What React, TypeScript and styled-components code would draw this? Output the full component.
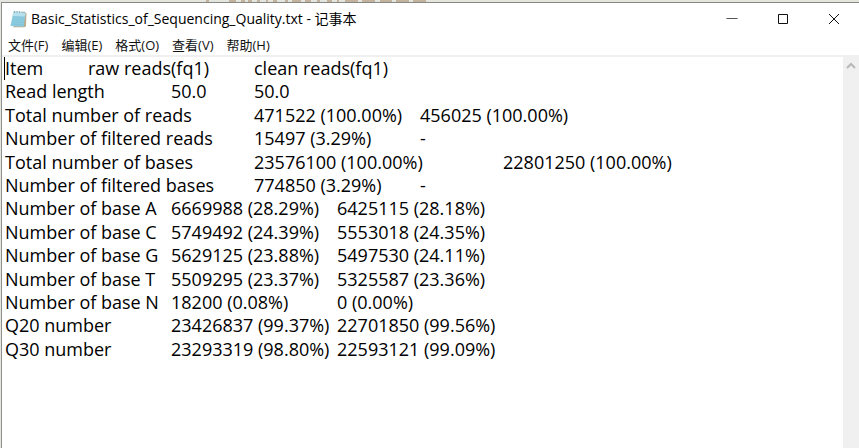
import React from "react";
import styled, { createGlobalStyle } from "styled-components";

const GlobalStyle = createGlobalStyle`
  * { box-sizing: border-box; }
  body {
    margin: 0;
    background: #e4e5df;
    color: #000;
    font-family: "Open Sans", "Noto Sans CJK SC", sans-serif;
  }
`;

const Desktop = styled.div`
  display: flex;
  flex-direction: column;
  height: 100vh;
  padding-left: 1px;
`;

const Backdrop = styled.svg`
  display: block;
  flex: none;
  width: 100%;
  height: 2px;
`;

const Window = styled.main`
  display: flex;
  flex: 1;
  flex-direction: column;
  min-height: 0;
  border-top: 1px solid #868884;
  border-left: 1px solid #8e908c;
  background: #fff;
`;

const TitleBar = styled.header`
  display: flex;
  flex: none;
  align-items: center;
  height: 32px;
  padding-left: 8px;
`;

const Title = styled.h1`
  flex: 1;
  margin: 0 0 0 4px;
  overflow: hidden;
  font-size: 14px;
  font-weight: 400;
  line-height: 20px;
  white-space: nowrap;
`;

const CaptionButton = styled.button`
  display: flex;
  flex: none;
  align-items: center;
  justify-content: center;
  width: 51px;
  height: 30px;
  padding: 0;
  border: 0;
  background: transparent;
`;

const MenuBar = styled.nav`
  display: flex;
  flex: none;
  gap: 13px;
  height: 20px;
  padding-left: 6px;
`;

const MenuButton = styled.button`
  padding: 0;
  border: 0;
  background: transparent;
  color: #111;
  font-family: inherit;
  font-size: 13px;
  line-height: 20px;
  white-space: nowrap;
`;

const Editor = styled.section`
  position: relative;
  display: flex;
  flex: 1;
  min-height: 0;
  border-top: 2px solid #f0f0f0;
`;

const TextArea = styled.textarea`
  flex: 1;
  min-width: 0;
  padding: 0 0 0 3px;
  border: 0;
  outline: 0;
  overflow: hidden;
  resize: none;
  background: #fff;
  color: #000;
  font-family: inherit;
  font-size: 18px;
  line-height: 1.3;
  tab-size: 83px;
  white-space: pre;
`;

const Caret = styled.span`
  position: absolute;
  top: 0;
  left: 2px;
  width: 1px;
  height: 23px;
  background: #000;
`;

const ScrollBar = styled.div`
  flex: none;
  width: 16px;
  background: #f0f0f0;
`;

const ScrollButton = styled.button`
  display: flex;
  align-items: center;
  justify-content: center;
  width: 16px;
  height: 18px;
  padding: 0;
  border: 0;
  background: transparent;
`;

const menus = ["文件(F)", "编辑(E)", "格式(O)", "查看(V)", "帮助(H)"];

const fileText = [
  "Item\traw reads(fq1)\tclean reads(fq1)",
  "Read length\t50.0\t50.0",
  "Total number of reads\t471522 (100.00%)\t456025 (100.00%)",
  "Number of filtered reads\t15497 (3.29%)\t-",
  "Total number of bases\t23576100 (100.00%)\t22801250 (100.00%)",
  "Number of filtered bases\t774850 (3.29%)\t-",
  "Number of base A\t6669988 (28.29%)\t6425115 (28.18%)",
  "Number of base C\t5749492 (24.39%)\t5553018 (24.35%)",
  "Number of base G\t5629125 (23.88%)\t5497530 (24.11%)",
  "Number of base T\t5509295 (23.37%)\t5325587 (23.36%)",
  "Number of base N\t18200 (0.08%)\t0 (0.00%)",
  "Q20 number\t23426837 (99.37%)\t22701850 (99.56%)",
  "Q30 number\t23293319 (98.80%)\t22593121 (99.09%)",
].join("\n");

const NotepadIcon = () => (
  <svg width="17" height="18" viewBox="0 0 17 18" aria-hidden="true">
    <path d="M14 2.5l2.5.5-.6 13.5-2 .8L3 17.3z" fill="#b9ab8c" />
    <path d="M3.5 1.5l12 .7-1.8 14.6L.5 16z" fill="#8ccbe0" />
    <path d="M3.5 1.5l12 .7-.5 4.2L2.6 6z" fill="#b5e0ec" />
    <path d="M2.4 7l12 .6M2.1 9.4l12 .6M1.8 11.8l12 .6M1.5 14.2l12 .6" stroke="#7dbfd5" strokeWidth=".5" />
    <path d="M4.5 1v1.6M7 1v1.6M9.5 1.2v1.6M12 1.4v1.6M14 1.5v1.6" stroke="#84979c" strokeWidth=".9" />
  </svg>
);

export default function App() {
  return (
    <>
      <GlobalStyle />
      <Desktop>
        <Backdrop aria-hidden="true">
          <path
            d="M205 1h3M228 1h7M240 1h4M247 1h4M256 1h3M265 1h2M272 1h4M284 1h3M291 1h9M304 1h6M316 1h3M326 1h5M336 1h2M344 1h13M361 1h13M379 1h12M395 1h13M412 1h13"
            stroke="#c3b39e"
            strokeWidth="2"
          />
        </Backdrop>
        <Window>
          <TitleBar>
            <NotepadIcon />
            <Title>Basic_Statistics_of_Sequencing_Quality.txt - 记事本</Title>
            <CaptionButton aria-label="最小化">
              <svg width="12" height="12" viewBox="0 0 12 12">
                <path d="M.5 5.5h11" stroke="#555" />
              </svg>
            </CaptionButton>
            <CaptionButton aria-label="最大化">
              <svg width="12" height="12" viewBox="0 0 12 12">
                <path d="M1.5 1.5h9v9h-9z" fill="none" stroke="#111" />
              </svg>
            </CaptionButton>
            <CaptionButton aria-label="关闭">
              <svg width="12" height="12" viewBox="0 0 12 12">
                <path d="M1 1l10 10M11 1L1 11" stroke="#111" />
              </svg>
            </CaptionButton>
          </TitleBar>
          <MenuBar>
            {menus.map((menu) => (
              <MenuButton key={menu}>{menu}</MenuButton>
            ))}
          </MenuBar>
          <Editor>
            <TextArea aria-label="文本编辑器" spellCheck={false} defaultValue={fileText} />
            <Caret />
            <ScrollBar>
              <ScrollButton aria-label="向上滚动">
                <svg width="10" height="8" viewBox="0 0 10 8">
                  <path d="M1 6l4-4 4 4" fill="none" stroke="#b8b8b8" strokeWidth="2" />
                </svg>
              </ScrollButton>
            </ScrollBar>
          </Editor>
        </Window>
      </Desktop>
    </>
  );
}
